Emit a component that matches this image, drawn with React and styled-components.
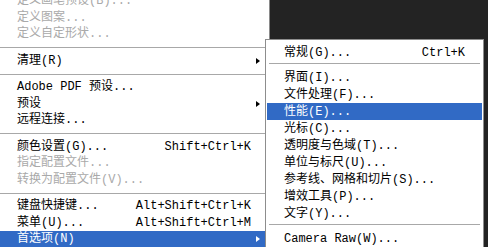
import React from "react";
import styled, { createGlobalStyle } from "styled-components";

const Global = createGlobalStyle`
  html, body {
    margin: 0;
    padding: 0;
    background: #232323;
    overflow: hidden;
  }
`;

const Screen = styled.div`
  position: relative;
  width: 488px;
  height: 247px;
  overflow: hidden;
  background: #232323;
  font-family: "Liberation Mono", "Noto Sans CJK SC", monospace;
  font-size: 12px;
`;

const MainMenu = styled.div`
  width: 269px;
  height: 260px;
  margin-top: -7px;
  background: #fff;
  border-right: 1px solid #8a8a8a;
  display: flex;
  flex-direction: column;
`;

const SubMenu = styled.div`
  position: absolute;
  left: 265px;
  top: 39px;
  width: 215px;
  padding: 4px 1px;
  background: #fff;
  border: 1px solid #8d8d8d;
  display: flex;
  flex-direction: column;
`;

const Row = styled.div`
  display: grid;
  grid-template-columns: 1fr auto ${(p) => p.$arrowCol}px;
  align-items: center;
  height: ${(p) => p.$h}px;
  padding-left: 17px;
  padding-right: ${(p) => p.$pr}px;
  color: ${(p) => (p.$active ? "#fff" : p.$disabled ? "#a9a9a9" : "#000")};
  background: ${(p) => (p.$active ? "#316ac5" : "transparent")};
  white-space: nowrap;
  line-height: 1;
`;

const Shortcut = styled.span`
  text-align: right;
`;

const Arrow = styled.span`
  justify-self: start;
  margin-left: 5px;
  width: 0;
  height: 0;
  border-top: 3.5px solid transparent;
  border-bottom: 3.5px solid transparent;
  border-left: 4px solid ${(p) => (p.$active ? "#fff" : "#000")};
`;

const Separator = styled.div`
  height: ${(p) => p.$h}px;
  display: flex;
  align-items: ${(p) => (p.$top ? "flex-start" : "center")};
  padding: 0 ${(p) => p.$inset}px;
  &::after {
    content: "";
    flex: 1;
    margin-top: ${(p) => (p.$top ? 2 : 0)}px;
    height: 1px;
    background: #a8a8a8;
    box-shadow: 0 1px 0 #fff;
  }
`;

const mainItems = [
  { label: "定义画笔预设(B)...", disabled: true },
  { label: "定义图案...", disabled: true },
  { label: "定义自定形状...", disabled: true },
  "sep",
  { label: "清理(R)", arrow: true },
  "sep",
  { label: "Adobe PDF 预设..." },
  { label: "预设", arrow: true },
  { label: "远程连接..." },
  "sep",
  { label: "颜色设置(G)...", shortcut: "Shift+Ctrl+K" },
  { label: "指定配置文件...", disabled: true },
  { label: "转换为配置文件(V)...", disabled: true },
  "sep",
  { label: "键盘快捷键...", shortcut: "Alt+Shift+Ctrl+K" },
  { label: "菜单(U)...", shortcut: "Alt+Shift+Ctrl+M" },
  { label: "首选项(N)", arrow: true, active: true },
];

const subItems = [
  { label: "常规(G)...", shortcut: "Ctrl+K" },
  "sep",
  { label: "界面(I)..." },
  { label: "文件处理(F)..." },
  { label: "性能(E)...", active: true },
  { label: "光标(C)..." },
  { label: "透明度与色域(T)..." },
  { label: "单位与标尺(U)..." },
  { label: "参考线、网格和切片(S)..." },
  { label: "增效工具(P)..." },
  { label: "文字(Y)..." },
  "sep",
  { label: "Camera Raw(W)..." },
];

function MenuList({ items, rowH, sepH, arrowCol, pr, inset, sepTop }) {
  return items.map((it, i) =>
    it === "sep" ? (
      <Separator key={i} $h={sepH} $inset={inset} $top={sepTop} />
    ) : (
      <Row
        key={i}
        $h={rowH}
        $arrowCol={arrowCol}
        $pr={pr}
        $active={it.active}
        $disabled={it.disabled}
      >
        <span>{it.label}</span>
        <Shortcut>{it.shortcut || ""}</Shortcut>
        {it.arrow ? <Arrow $active={it.active} /> : <span />}
      </Row>
    )
  );
}

export default function App() {
  return (
    <Screen>
      <Global />
      <MainMenu>
        <MenuList
          items={mainItems}
          rowH={16.5}
          sepH={10}
          arrowCol={18}
          pr={0}
          inset={0}
        />
      </MainMenu>
      <SubMenu>
        <MenuList
          items={subItems}
          rowH={17}
          sepH={8}
          arrowCol={0}
          pr={17}
          inset={2}
          sepTop
        />
      </SubMenu>
    </Screen>
  );
}
